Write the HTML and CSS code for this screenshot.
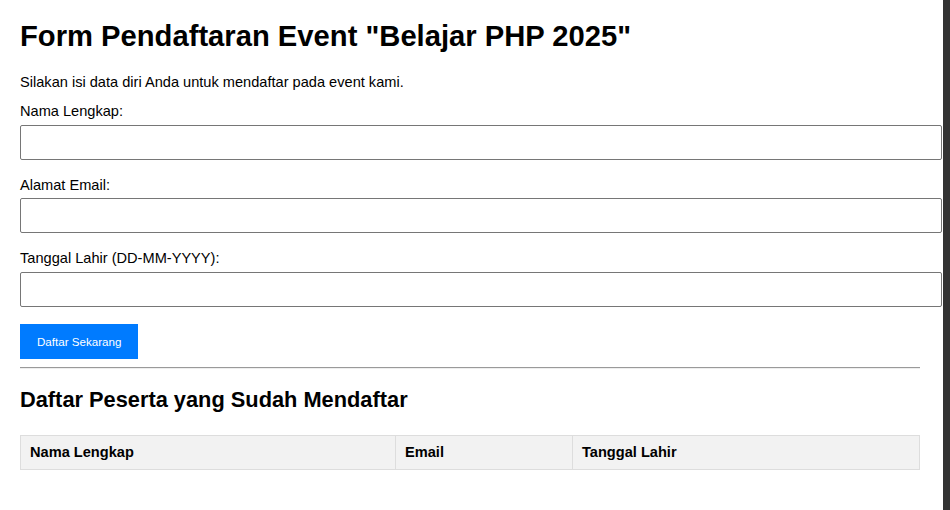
FILE: index.html
```html
<!DOCTYPE html>
<html lang="id">
<head>
<meta charset="UTF-8">
<title>Form Pendaftaran Event</title>
<link rel="stylesheet" href="styles.css">
</head>
<body>
<div class="container">
  <h1 class="title">Form Pendaftaran Event "Belajar PHP 2025"</h1>
  <p class="intro">Silakan isi data diri Anda untuk mendaftar pada event kami.</p>
  <form class="form">
    <div class="form-group">
      <label class="label" for="nama">Nama Lengkap:</label>
      <input class="input" type="text" id="nama" name="nama">
    </div>
    <div class="form-group">
      <label class="label" for="email">Alamat Email:</label>
      <input class="input" type="text" id="email" name="email">
    </div>
    <div class="form-group">
      <label class="label" for="tgl">Tanggal Lahir (DD-MM-YYYY):</label>
      <input class="input" type="text" id="tgl" name="tgl">
    </div>
    <button class="btn" type="button">Daftar Sekarang</button>
  </form>
  <hr class="divider">
  <h2 class="subtitle">Daftar Peserta yang Sudah Mendaftar</h2>
  <table class="table">
    <thead>
      <tr>
        <th class="col-nama">Nama Lengkap</th>
        <th class="col-email">Email</th>
        <th class="col-tgl">Tanggal Lahir</th>
      </tr>
    </thead>
  </table>
</div>
<div class="edge"></div>
</body>
</html>
```
FILE: styles.css
```css
html, body {
  margin: 0;
  padding: 0;
  background: #fff;
}
body {
  font-family: "Liberation Sans", Arial, sans-serif;
  font-size: 14.6px;
  color: #000;
}
.container {
  width: 900px;
  padding: 20px 20px 20px;
}
.title {
  font-size: 29.2px;
  font-weight: bold;
  margin: 0 0 20.5px;
}
.intro {
  margin: 0 0 13.5px;
}
.form-group {
  margin-bottom: 17px;
}
.label {
  display: block;
  margin-bottom: 5.5px;
}
.input {
  display: block;
  box-sizing: content-box;
  width: 100%;
  height: 17px;
  padding: 8px 10px;
  margin: 0;
  border: 1px solid #767676;
  border-radius: 2px;
  font: inherit;
  background: #fff;
}
.btn {
  display: block;
  margin: 1px 0 0;
  height: 35px;
  padding: 0 17px;
  border: none;
  background: #007bff;
  color: #fff;
  font-family: "Liberation Sans", Arial, sans-serif;
  font-size: 11.6px;
  cursor: pointer;
}
.divider {
  margin: 8px 0 0;
  border: none;
  border-top: 1px solid #9a9a9a;
  border-bottom: 1px solid #eeeeee;
}
.subtitle {
  font-size: 21.8px;
  font-weight: bold;
  margin: 18px 0 22.5px;
}
.table {
  width: 100%;
  border-collapse: collapse;
  table-layout: fixed;
}
.table th {
  background: #f2f2f2;
  border: 1px solid #dddddd;
  padding: 8px 9px 9px;
  text-align: left;
  font-weight: bold;
  font-size: 14.6px;
}
.col-nama { width: 356px; }
.col-email { width: 158px; }
.edge {
  position: fixed;
  top: 0;
  right: 0;
  bottom: 0;
  width: 7px;
  background: #333;
}
```
